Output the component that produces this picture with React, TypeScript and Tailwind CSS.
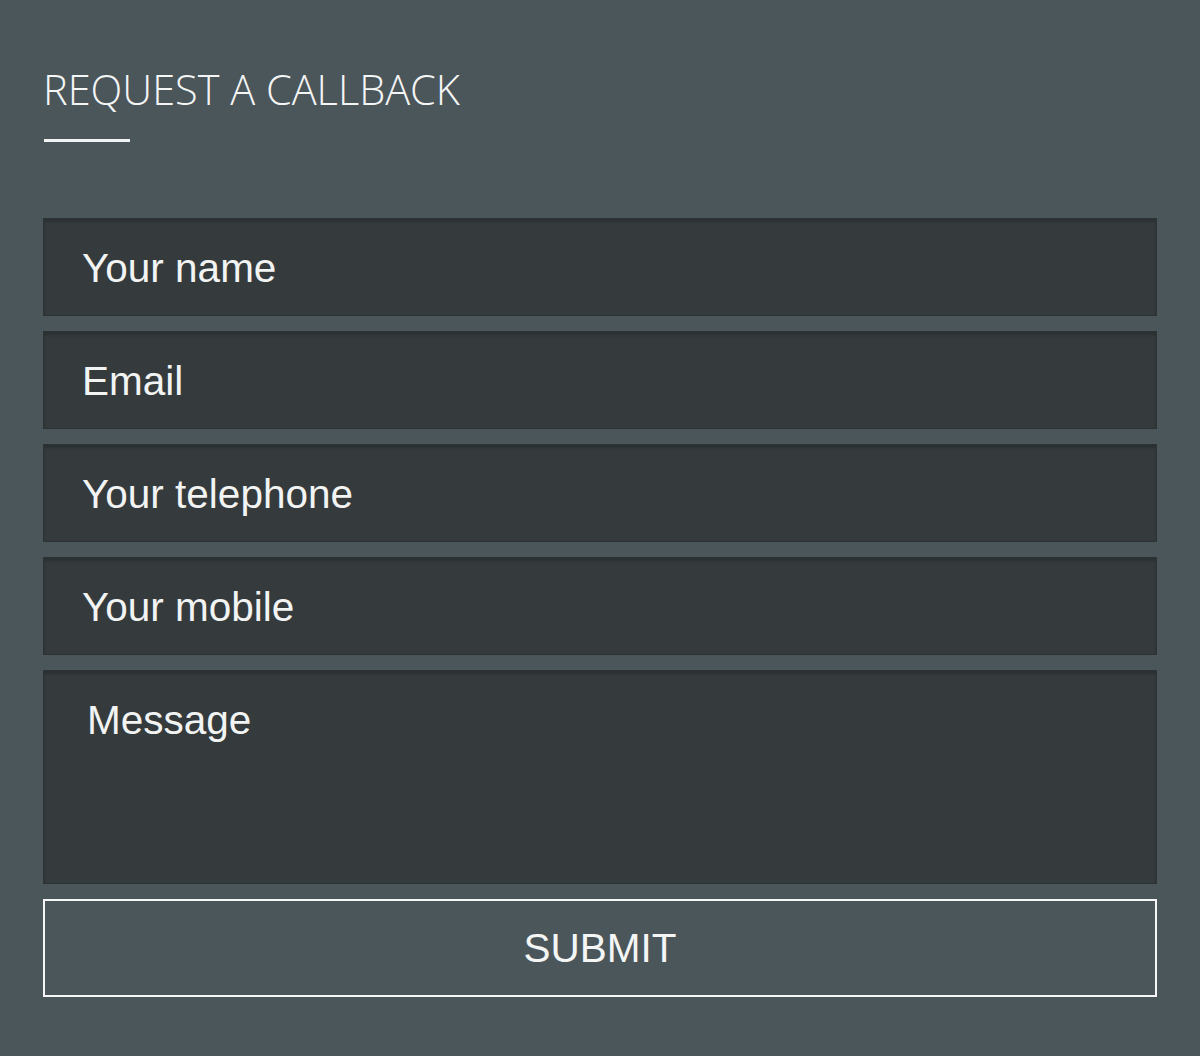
const fields = ["Your name", "Email", "Your telephone", "Your mobile"];

export default function App() {
  return (
    <main className="min-h-[1056px] w-full bg-[#4b565b] px-[43px] pt-[61px] pb-[58px] font-['Liberation_Sans',Arial,sans-serif]">
      <h2 className="font-['Open_Sans',sans-serif] text-[41.5px] font-light leading-[56px] text-[#f4f5f5]">
        REQUEST A CALLBACK
      </h2>
      <div className="mt-[22px] ml-px h-[3px] w-[86px] bg-[#f2f3f3]" />

      <form className="mt-[76px] flex flex-col gap-[15px]">
        {fields.map((f) => (
          <input
            key={f}
            placeholder={f}
            className="h-[98px] w-full border border-[#2d3234] bg-[#353b3d] px-[38px] pt-[3px] text-[40.5px] text-white shadow-[inset_0_3px_3px_rgba(0,0,0,0.18)] outline-none placeholder:text-[#f2f3f3]"
          />
        ))}
        <textarea
          placeholder="Message"
          className="h-[214px] w-full resize-none border border-[#2d3234] bg-[#353b3d] px-[43px] pt-[26px] text-[40.5px] leading-[46px] text-white shadow-[inset_0_3px_3px_rgba(0,0,0,0.18)] outline-none placeholder:text-[#f2f3f3]"
        />
        <button
          type="button"
          className="h-[98px] w-full border-2 border-[#f4f5f5] bg-transparent text-[40.5px] text-[#f4f5f5]"
        >
          SUBMIT
        </button>
      </form>
    </main>
  );
}
